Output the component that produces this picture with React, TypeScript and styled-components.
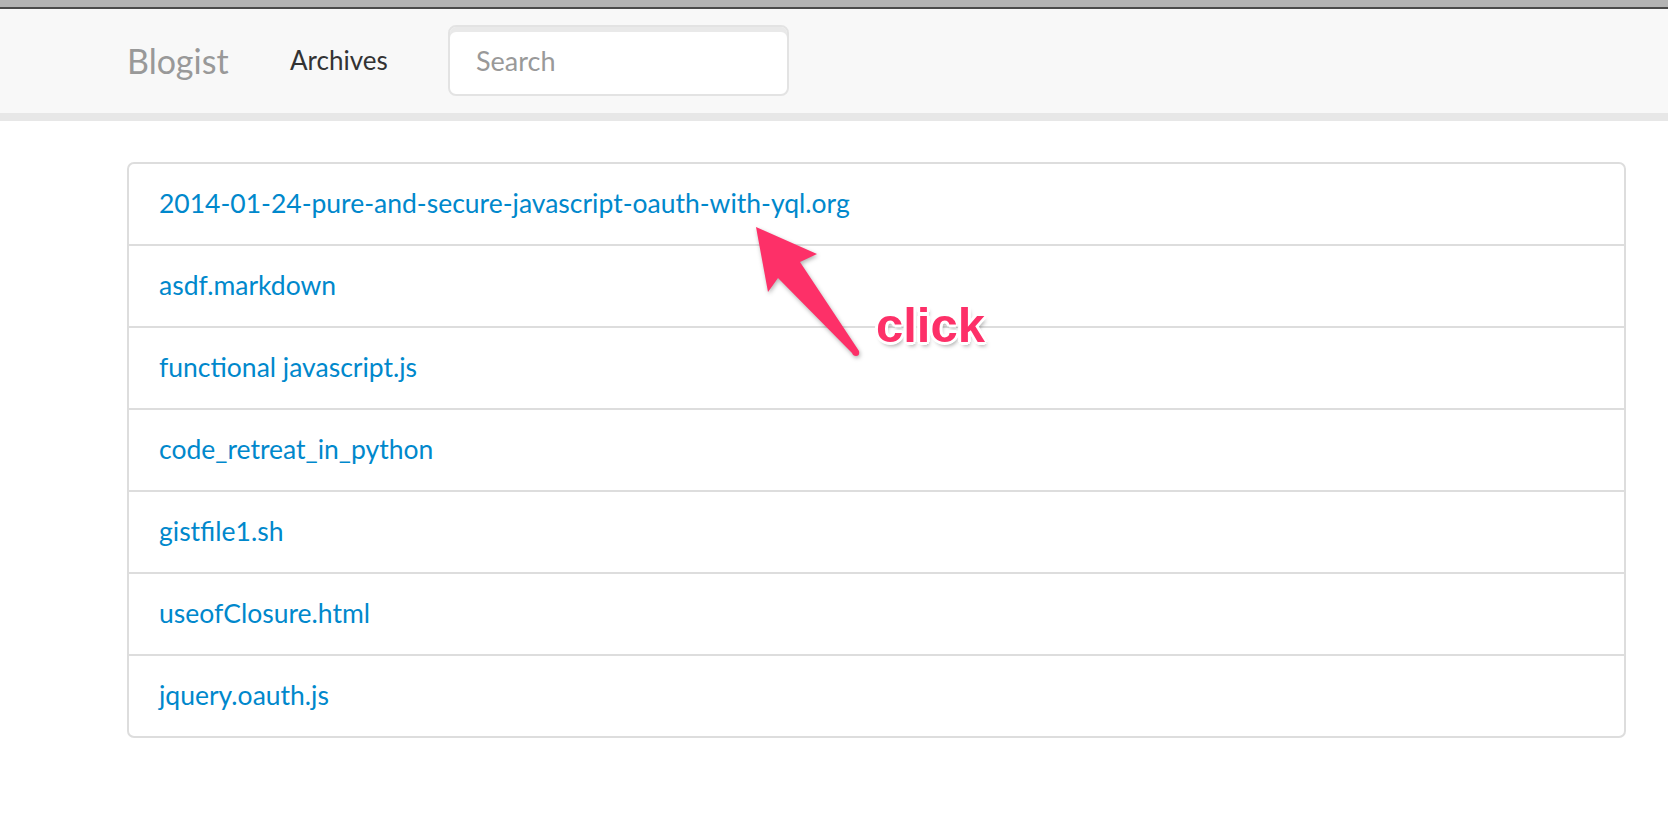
import React from "react"
import styled, { createGlobalStyle } from "styled-components"

const posts = [
  "2014-01-24-pure-and-secure-javascript-oauth-with-yql.org",
  "asdf.markdown",
  "functional javascript.js",
  "code_retreat_in_python",
  "gistfile1.sh",
  "useofClosure.html",
  "jquery.oauth.js",
]

const GlobalStyle = createGlobalStyle`
  html, body {
    margin: 0;
    padding: 0;
    background: #ffffff;
    font-family: Lato, "Open Sans", sans-serif;
  }
`

const App: React.FC = () => {
  return (
    <StyledPage>
      <GlobalStyle />
      <StyledTopBar />
      <StyledNavbar>
        <StyledNavInner>
          <StyledBrand href="#">Blogist</StyledBrand>
          <StyledNavLink href="#">Archives</StyledNavLink>
          <StyledSearch placeholder="Search" />
        </StyledNavInner>
      </StyledNavbar>
      <StyledMain>
        <StyledList>
          {posts.map((post) => (
            <StyledItem key={post}>
              <StyledPostLink href="#">{post}</StyledPostLink>
            </StyledItem>
          ))}
        </StyledList>
      </StyledMain>
      <StyledArrow width="140" height="160" viewBox="0 0 140 160">
        <path
          d="M16 12 L77 39 L60 47 L119 136 Q120 141 116 141 Q113 141 112 138 L38 63 L28 77 Z"
          fill="#fd3068"
        />
      </StyledArrow>
      <StyledClick>click</StyledClick>
    </StyledPage>
  )
}

const StyledPage = styled.div`
  position: relative;
  min-height: 838px;
`

const StyledTopBar = styled.div`
  height: 7px;
  background: #b3b3b3;
  border-bottom: 2px solid #4a4a4a;
`

const StyledNavbar = styled.div`
  height: 104px;
  background: #f8f8f8;
  border-bottom: 8px solid #e7e7e7;
`

const StyledNavInner = styled.div`
  display: flex;
  align-items: center;
  height: 100%;
  margin-left: 127px;
  padding-bottom: 2px;
  box-sizing: border-box;
`

const StyledBrand = styled.a`
  font-size: 34px;
  color: #999999;
  text-decoration: none;
  width: 163px;
`

const StyledNavLink = styled.a`
  font-size: 26px;
  color: #333333;
  text-decoration: none;
  width: 158px;
`

const StyledSearch = styled.input`
  width: 341px;
  height: 71px;
  box-sizing: border-box;
  border: 2px solid #e3e3e3;
  border-radius: 8px;
  background: #ffffff;
  box-shadow: inset 0 5px 0 #e9e9e9;
  padding: 0 26px;
  font-family: Lato, "Open Sans", sans-serif;
  font-size: 27px;
  color: #555555;
  outline: none;

  &::placeholder {
    color: #999999;
  }
`

const StyledMain = styled.div`
  padding-top: 41px;
  margin-left: 127px;
  width: 1499px;
`

const StyledList = styled.ul`
  list-style: none;
  margin: 0;
  padding: 0;
  border: 2px solid #dddddd;
  border-radius: 7px;
`

const StyledItem = styled.li`
  height: 80px;
  display: flex;
  align-items: center;
  padding-left: 30px;

  & + & {
    border-top: 2px solid #dddddd;
  }
`

const StyledPostLink = styled.a`
  font-size: 26.5px;
  color: #0088cc;
  text-decoration: none;
  margin-top: -2px;
`

const StyledArrow = styled.svg`
  position: absolute;
  left: 740px;
  top: 215px;
  filter: drop-shadow(1px 2px 2px rgba(0, 0, 0, 0.3));
`

const StyledClick = styled.div`
  position: absolute;
  left: 876px;
  top: 301px;
  font-family: "Liberation Sans", Arial, sans-serif;
  font-weight: bold;
  font-size: 49px;
  line-height: 48px;
  color: #fd3068;
  text-shadow: -2px -2px 0 #fff, 2px -2px 0 #fff, -2px 2px 0 #fff, 2px 2px 0 #fff,
    0 -3px 0 #fff, 0 3px 0 #fff, -3px 0 0 #fff, 3px 0 0 #fff,
    2px 4px 4px rgba(0, 0, 0, 0.35);
`

export default App
